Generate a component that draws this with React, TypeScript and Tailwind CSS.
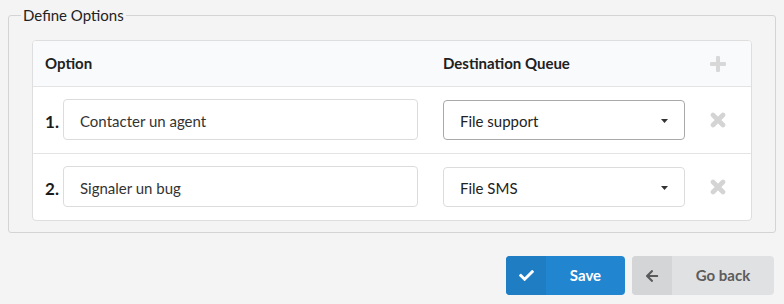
import { FaCheck, FaArrowLeft } from 'react-icons/fa';

type Row = {
  label: string;
  queue: string;
  active?: boolean;
};

const rows: Row[] = [
  { label: 'Contacter un agent', queue: 'File support', active: true },
  { label: 'Signaler un bug', queue: 'File SMS' },
];

function Caret() {
  return (
    <svg width="7" height="4" viewBox="0 0 7 4" className="text-[#333]">
      <path d="M0 0 L7 0 L3.5 4 Z" fill="currentColor" />
    </svg>
  );
}

function PlusIcon() {
  return (
    <svg width="16" height="16" viewBox="0 0 16 16" className="text-[#d8d8d8]">
      <path
        d="M6 1.2Q6 0 7.2 0h1.6Q10 0 10 1.2V6h4.8Q16 6 16 7.2v1.6Q16 10 14.8 10H10v4.8Q10 16 8.8 16H7.2Q6 16 6 14.8V10H1.2Q0 10 0 8.8V7.2Q0 6 1.2 6H6z"
        fill="currentColor"
      />
    </svg>
  );
}

function RemoveIcon() {
  return (
    <svg width="16" height="16" viewBox="0 0 16 16" className="text-[#d4d4d4]">
      <path d="M3 3L13 13M13 3L3 13" stroke="currentColor" strokeWidth="4.6" strokeLinecap="round" />
    </svg>
  );
}

export default function App() {
  return (
    <div className="min-h-[304px] bg-[#f4f4f4] pt-[5px] font-['Lato',sans-serif] text-[15px] text-[#212121]">
      <fieldset className="mx-[8px] rounded-[3px] border border-[#d4d4d5] px-[23px] pt-[15px] pb-[11px]">
        <legend className="ml-[-11px] px-[2px] text-[15px] leading-[20px] text-[#222]">Define Options</legend>

        <div className="overflow-hidden rounded-[4px] border border-[#dededf] bg-white">
          <div className="flex h-[46px] items-center border-b border-[#e4e4e5] bg-[#f9fafb] pl-[12px] font-bold">
            <div className="w-[398px]">Option</div>
            <div className="w-[242px]">Destination Queue</div>
            <div className="flex w-[66px] justify-center">
              <PlusIcon />
            </div>
          </div>

          {rows.map((row, i) => (
            <div
              key={row.label}
              className={
                i < rows.length - 1
                  ? 'flex items-center border-b border-[#e4e4e5] pl-[12px] pt-3 pb-[13px]'
                  : 'flex items-center pl-[12px] pt-3 pb-[13px]'
              }
            >
              <div className="w-[18px] pt-[4px] text-[17px] font-bold text-[#1b1b1b]">{i + 1}.</div>
              <div className="flex h-[41px] w-[355px] items-center rounded-[4px] border border-[#dcdcdc] px-[16px] pt-[3px] text-[#333]">
                {row.label}
              </div>
              <div className="w-[25px]" />
              <div
                className={
                  row.active
                    ? 'flex h-[40px] w-[242px] items-center justify-between rounded-[4px] border border-[#a9a9a9] pl-[16px] pr-[16px] pt-[3px] text-[#222]'
                    : 'flex h-[40px] w-[242px] items-center justify-between rounded-[4px] border border-[#dcdcdc] pl-[16px] pr-[16px] pt-[3px] text-[#222]'
                }
              >
                <span>{row.queue}</span>
                <Caret />
              </div>
              <div className="flex w-[66px] justify-center">
                <RemoveIcon />
              </div>
            </div>
          ))}
        </div>
      </fieldset>

      <div className="mt-[23px] flex justify-end gap-[7px] pr-[10px]">
        <button className="flex h-[39px] w-[119px] overflow-hidden rounded-[4px] bg-[#2185d0] font-bold text-white">
          <span className="flex h-full w-[40px] items-center justify-center bg-[#1f7dc4]">
            <FaCheck className="h-[15px] w-[15px]" />
          </span>
          <span className="flex flex-1 items-center justify-center">Save</span>
        </button>
        <button className="flex h-[39px] w-[142px] overflow-hidden rounded-[4px] bg-[#e0e1e2] font-bold text-[#5c5c5c]">
          <span className="flex h-full w-[40px] items-center justify-center bg-[#d4d5d6]">
            <FaArrowLeft className="h-[14px] w-[14px] text-[#5a5a5a]" />
          </span>
          <span className="flex flex-1 items-center justify-center">Go back</span>
        </button>
      </div>
    </div>
  );
}
